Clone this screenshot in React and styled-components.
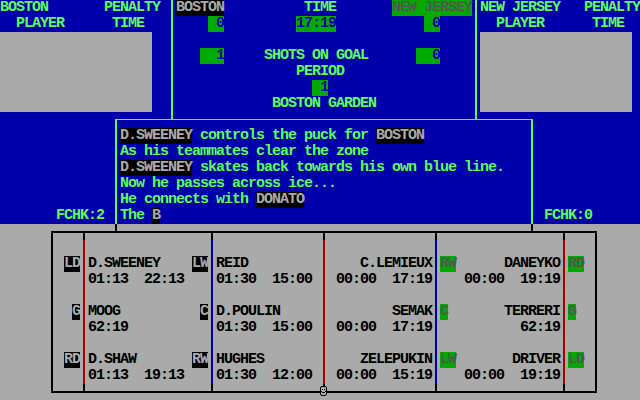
import React from 'react'
import styled, { createGlobalStyle } from 'styled-components'

const BLUE = '#0000aa'
const GREEN = '#55ff55'
const DKGREEN = '#00aa00'
const GRAY = '#aaaaaa'
const DGRAY = '#555555'
const RED = '#aa0000'

const GlobalStyle = createGlobalStyle`
  html, body { margin: 0; padding: 0; background: ${GRAY}; }
  body {
    font-family: "Liberation Mono", "DejaVu Sans Mono", monospace;
    font-weight: bold;
    font-size: 15px;
    letter-spacing: -1px;
    line-height: 16px;
  }
`

const Screen = styled.div`
  width: 640px;
  height: 400px;
  overflow: hidden;
  background: ${GRAY};
`

const Board = styled.div`
  height: 224px;
  background: ${BLUE};
  color: ${GREEN};
`

const TopRow = styled.div`
  display: flex;
  height: 119px;
`

const TeamSide = styled.div`
  box-sizing: border-box;
  width: ${p => (p.$w ? `${p.$w}px` : 'auto')};
  flex: ${p => (p.$w ? 'none' : '1')};
  padding-left: ${p => p.$pad || 0}px;
`

const Scoreboard = styled.div`
  box-sizing: border-box;
  width: 306px;
  border-left: 2px solid ${GREEN};
  border-right: 2px solid ${GREEN};
  padding-left: 3px;
`

const Line = styled.div`
  height: 16px;
  line-height: 16px;
  white-space: pre;
`

const tones = {
  name: { bg: '#000', fg: GRAY },
  score: { bg: DKGREEN, fg: BLUE },
  away: { bg: DKGREEN, fg: DGRAY },
}

const Chip = styled.span`
  display: inline-block;
  height: 16px;
  vertical-align: top;
  background: ${p => tones[p.$tone].bg};
  color: ${p => tones[p.$tone].fg};
`

const PenaltyBox = styled.div`
  width: 152px;
  height: 80px;
  background: ${GRAY};
`

const MidRow = styled.div`
  display: flex;
  height: 105px;
`

const SideCol = styled.div`
  box-sizing: border-box;
  display: flex;
  flex-direction: column;
  justify-content: flex-end;
  width: ${p => (p.$w ? `${p.$w}px` : 'auto')};
  flex: ${p => (p.$w ? 'none' : '1')};
  padding-left: ${p => p.$pad}px;
`

const Ticker = styled.div`
  box-sizing: border-box;
  width: 418px;
  border-top: 1px solid ${GREEN};
  border-left: 2px solid ${GREEN};
  border-right: 2px solid ${GREEN};
  padding: 8px 0 0 3px;
`

const Stubs = styled.div`
  display: flex;
  height: 7px;
  padding-left: 115px;
`

const Stub = styled.div`
  width: 2px;
  background: #000;
  & + & { margin-left: 414px; }
`

const Panel = styled.div`
  position: relative;
  box-sizing: border-box;
  margin-left: 51px;
  width: 546px;
  height: 162px;
  border: 2px solid #000;
  display: grid;
  grid-template-columns: 30px 2px 126px 2px 110px 2px 110px 2px 126px 2px 30px;
  color: #000;
`

const Divider = styled.div`
  background: ${p => p.$color};
  border-top: 7px solid #000;
  border-bottom: 7px solid #000;
`

const Column = styled.div`
  display: flex;
  flex-direction: column;
  gap: 16px;
  padding: 23px 3px 0;
`

const Group = styled.div`
  height: 32px;
`

const Row = styled.div`
  display: flex;
  justify-content: ${p => p.$justify || 'flex-start'};
  height: 16px;
  line-height: 16px;
  white-space: pre;
`

const Badge = styled.span`
  display: inline-block;
  height: 16px;
  background: ${p => (p.$away ? DKGREEN : '#000')};
  color: ${p => (p.$away ? DGRAY : GRAY)};
`

const Face = styled.svg`
  position: absolute;
  left: 267px;
  top: 153px;
`

const TagColumn = ({ tags, away }) => (
  <Column>
    {tags.map(t => (
      <Group key={t}>
        <Row $justify={away ? 'flex-start' : 'flex-end'}>
          <Badge $away={away}>{t}</Badge>
        </Row>
      </Group>
    ))}
  </Column>
)

const PlayerColumn = ({ players, align, tagSide, away }) => (
  <Column>
    {players.map(p => (
      <Group key={p.name}>
        <Row $justify={p.tag ? 'space-between' : align}>
          {p.tag && tagSide === 'left' && <Badge $away={away}>{p.tag}</Badge>}
          <span>{p.name}</span>
          {p.tag && tagSide === 'right' && <Badge $away={away}>{p.tag}</Badge>}
        </Row>
        <Row $justify={align}>{p.times}</Row>
      </Group>
    ))}
  </Column>
)

const defenseHome = [
  { name: 'D.SWEENEY', tag: 'LW', times: '01:13  22:13' },
  { name: 'MOOG', tag: 'C', times: '62:19' },
  { name: 'D.SHAW', tag: 'RW', times: '01:13  19:13' },
]
const forwardsHome = [
  { name: 'REID', times: '01:30  15:00' },
  { name: 'D.POULIN', times: '01:30  15:00' },
  { name: 'HUGHES', times: '01:30  12:00' },
]
const forwardsAway = [
  { name: 'C.LEMIEUX', times: '00:00  17:19' },
  { name: 'SEMAK', times: '00:00  17:19' },
  { name: 'ZELEPUKIN', times: '00:00  15:19' },
]
const defenseAway = [
  { name: 'DANEYKO', tag: 'RW', times: '00:00  19:19' },
  { name: 'TERRERI', tag: 'C', times: '62:19' },
  { name: 'DRIVER', tag: 'LW', times: '00:00  19:19' },
]

export default function App() {
  return (
    <Screen>
      <GlobalStyle />
      <Board>
        <TopRow>
          <TeamSide $w={171}>
            <Line>{'BOSTON       PENALTY'}</Line>
            <Line>{'  PLAYER      TIME'}</Line>
            <PenaltyBox />
          </TeamSide>
          <Scoreboard>
            <Line>
              <Chip $tone="name">BOSTON</Chip>
              {'          TIME       '}
              <Chip $tone="away">NEW JERSEY</Chip>
            </Line>
            <Line>
              {'    '}
              <Chip $tone="score">{' 0'}</Chip>
              {'         '}
              <Chip $tone="score">17:19</Chip>
              {'           '}
              <Chip $tone="score">{' 0'}</Chip>
            </Line>
            <Line />
            <Line>
              {'   '}
              <Chip $tone="score">{'  1'}</Chip>
              {'     SHOTS ON GOAL      '}
              <Chip $tone="score">{'  0'}</Chip>
            </Line>
            <Line>{'               PERIOD'}</Line>
            <Line>
              {'                 '}
              <Chip $tone="score">{' 1'}</Chip>
            </Line>
            <Line>{'            BOSTON GARDEN'}</Line>
          </Scoreboard>
          <TeamSide $pad={3}>
            <Line>{'NEW JERSEY   PENALTY'}</Line>
            <Line>{'  PLAYER      TIME'}</Line>
            <PenaltyBox />
          </TeamSide>
        </TopRow>
        <MidRow>
          <SideCol $w={115} $pad={56}>
            <Line>FCHK:2</Line>
          </SideCol>
          <Ticker>
            <Line>
              <Chip $tone="name">D.SWEENEY</Chip>
              {' controls the puck for '}
              <Chip $tone="name">BOSTON</Chip>
            </Line>
            <Line>As his teammates clear the zone</Line>
            <Line>
              <Chip $tone="name">D.SWEENEY</Chip>
              {' skates back towards his own blue line.'}
            </Line>
            <Line>Now he passes across ice...</Line>
            <Line>
              {'He connects with '}
              <Chip $tone="name">DONATO</Chip>
            </Line>
            <Line>
              {'The '}
              <Chip $tone="name">B</Chip>
            </Line>
          </Ticker>
          <SideCol $pad={11}>
            <Line>FCHK:0</Line>
          </SideCol>
        </MidRow>
      </Board>
      <Stubs>
        <Stub />
        <Stub />
      </Stubs>
      <Panel>
        <TagColumn tags={['LD', 'G', 'RD']} />
        <Divider $color={RED} />
        <PlayerColumn players={defenseHome} align="flex-start" tagSide="right" />
        <Divider $color={BLUE} />
        <PlayerColumn players={forwardsHome} align="flex-start" />
        <Divider $color={RED} />
        <PlayerColumn players={forwardsAway} align="flex-end" />
        <Divider $color={BLUE} />
        <PlayerColumn players={defenseAway} align="flex-end" tagSide="left" away />
        <Divider $color={RED} />
        <TagColumn tags={['RD', 'G', 'LD']} away />
        <Face width="7" height="10" viewBox="0 0 7 10">
          <rect x="0.5" y="0.5" width="6" height="9" rx="1.5" fill={GRAY} stroke="#000" />
          <rect x="2" y="3" width="1" height="1" fill="#000" />
          <rect x="4" y="3" width="1" height="1" fill="#000" />
          <rect x="1" y="5" width="1" height="1" fill="#000" />
          <rect x="5" y="5" width="1" height="1" fill="#000" />
          <rect x="2" y="6" width="3" height="1" fill="#000" />
        </Face>
      </Panel>
    </Screen>
  )
}
